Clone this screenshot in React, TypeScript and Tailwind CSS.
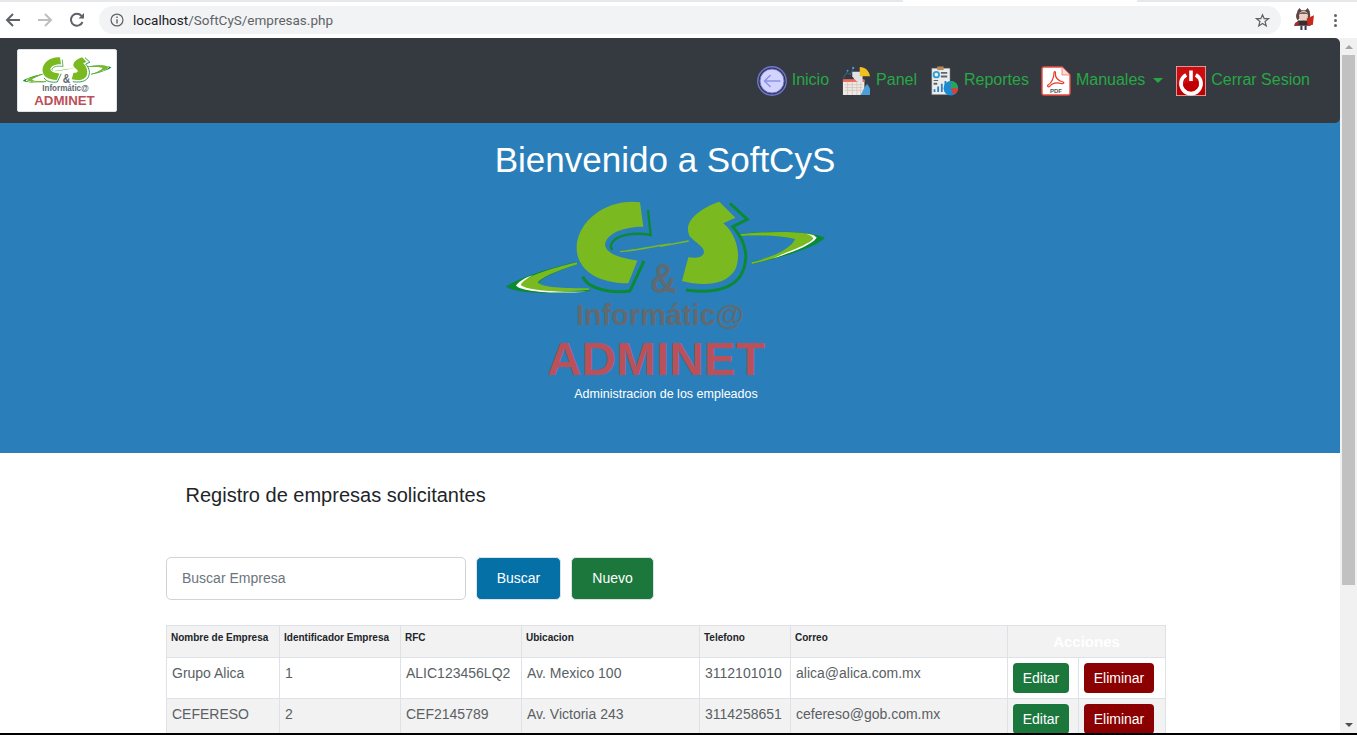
const F = { fontFamily: '"Liberation Sans", Arial, sans-serif' };
const LS = '"Liberation Sans", Arial, sans-serif';
const LG = "#7aba20";
const DG = "#0a8a34";

function Logo({ className = "" }: { className?: string }) {
  return (
    <svg viewBox="0 0 350 220" className={className}>
      <g transform="translate(10 5) scale(.3333)">
        <path d="M232 200C150 218 50 250 18 275C45 297 180 298 270 288L268 280C190 285 130 280 115 265C130 245 190 222 232 208Z" fill={DG} />
        <path d="M230 202C150 220 70 250 48 270C70 292 190 293 268 284L268 280C190 280 125 278 113 262C135 240 190 222 232 208Z" fill={LG} />
        <path d="M48 272C60 255 85 245 100 240C80 250 65 262 62 270C80 285 150 292 260 290C170 296 70 292 48 272Z" fill="#ffffff" />
        <path d="M420 22C330 10 235 70 230 155C228 215 280 265 385 265L412 197C370 190 320 180 315 150C318 115 370 95 430 95Z" fill={LG} />
        <path d="M444 45L452 120C410 112 345 115 333 150C331 158 335 162 338 164" fill="none" stroke={DG} strokeWidth="7" />
        <path d="M248 245C265 285 340 295 390 288L432 198" fill="none" stroke={DG} strokeWidth="9" />
        <path d="M360 168C400 165 460 152 510 145V148C460 158 400 170 360 172Z" fill={LG} />
      </g>
      <g transform="translate(170 5) scale(.3333)">
        <path d="M240 118C330 105 450 108 495 128C470 155 380 185 275 207V202C340 185 400 160 405 132C360 122 300 120 240 123Z" fill={DG} />
        <path d="M240 118C330 108 420 108 465 120C460 145 380 185 275 207V202C340 185 395 160 405 132C360 122 300 120 240 123Z" fill={LG} />
        <path d="M430 115C450 118 465 122 470 128C455 150 400 170 340 190C395 165 450 148 460 130C455 122 445 118 430 115Z" fill="#ffffff" />
        <path d="M178 20L226 68L190 85C232 120 245 185 225 225C195 275 120 272 66 258L85 187C105 190 130 190 132 170C132 155 110 145 90 125C65 80 120 40 178 20Z" fill={LG} />
        <path d="M210 25L262 73L218 95C260 140 270 195 240 245C205 292 130 292 78 285" fill="none" stroke={DG} strokeWidth="9" />
        <path d="M0 152L85 136L87 140L0 156Z" fill={LG} />
      </g>
      <text x="160" y="103" fontFamily={LS} fontSize="43" fontWeight="700" fill="#5f6a72" textLength="27" lengthAdjust="spacingAndGlyphs">&amp;</text>
      <text x="86" y="135" fontFamily={LS} fontSize="30" fontWeight="700" fill="#626a70" textLength="168" lengthAdjust="spacingAndGlyphs">Informátic@</text>
      <text x="57" y="185" fontFamily={LS} fontSize="47" fontWeight="700" fill="#b9505a" textLength="218" lengthAdjust="spacingAndGlyphs">ADMINET</text>
    </svg>
  );
}

function NavIcon({ kind }: { kind: string }) {
  if (kind === "inicio")
    return (
      <svg viewBox="0 0 32 32" className="w-[30px] h-[30px] shrink-0">
        <circle cx="16" cy="16" r="15.200" fill="#343a40" stroke="#7178d8" strokeWidth="1.400" />
        <circle cx="16" cy="16" r="12.800" fill="#d3d3ff" stroke="#6c70d0" strokeWidth="1" />
        <path d="M25 16H8M14.500 9.500L8 16L14.500 22.500" fill="none" stroke="#8a90e8" strokeWidth="1.500" />
      </svg>
    );
  if (kind === "panel")
    return (
      <svg viewBox="0 0 30 32" className="w-[28px] h-[30px] shrink-0">
        <path d="M1 15H24V31H1Z" fill="#efe8e3" />
        <path d="M1 14H24V17H1Z" fill="#ec6a5c" />
        <path d="M3 20H22M3 23H22M3 26H22M6 17V31M11 17V31M16 17V31M20 17V31" stroke="#c9bdb7" strokeWidth=".7" />
        <path d="M11 6H22V19C17 18 13 15 11 11Z" fill="#dfe3e6" />
        <path d="M19 1C25 1 29 5 30 11H19Z" fill="#f0c020" />
        <path d="M20 31L24 23L27 19L30 24V31Z" fill="#4a9fd8" />
        <path d="M1 13L5 7L9 9L12 3" fill="none" stroke="#35607f" strokeWidth="1.200" />
        <circle cx="12" cy="2" r="1.200" fill="#4a9fd8" />
        <circle cx="6" cy="5" r="1" fill="#4a9fd8" />
      </svg>
    );
  if (kind === "reportes")
    return (
      <svg viewBox="0 0 32 32" className="w-[29px] h-[30px] shrink-0">
        <path d="M2 2H22V31H2Z" fill="#ededec" stroke="#8f8f8f" strokeWidth=".5" />
        <path d="M8 0H15V4H8Z" fill="#b88a5a" />
        <circle cx="7" cy="9" r="3" fill="none" stroke="#2b9fd8" strokeWidth="2" />
        <path d="M12 6H19V8H12ZM12 10H19V12H12ZM4 15H9V16H4ZM4 18H8V20H4Z" fill="#5b6770" />
        <path d="M4 28V25H6V28ZM8 28V22H10V28ZM12 28V19H14V28ZM16 28V16H18V28Z" fill="#2b80c0" />
        <circle cx="23" cy="24" r="8" fill="#1b8ad0" />
        <path d="M23 24V16A8 8 0 0 1 31 24Z" fill="#26a65b" />
        <path d="M23 24H31A8 8 0 0 1 26 31Z" fill="#e43d30" />
      </svg>
    );
  if (kind === "pdf")
    return (
      <svg viewBox="0 0 30 30" className="w-[30px] h-[30px] shrink-0">
        <path d="M3 1H21L29 9V27Q29 29 27 29H3Q1 29 1 27V3Q1 1 3 1Z" fill="#fff" stroke="#ea4c40" strokeWidth="1.400" />
        <path d="M21 1V9H29" fill="#f7dcd9" stroke="#ea4c40" strokeWidth=".6" />
        <path d="M7 19C11 17 13 11 13 7C13 5 15 5 14.500 8C14 11 17 15 22 16C24 17 22 18 20 17.500C16 16 11 17 9 20C7 22 6 20 7 19Z" fill="none" stroke="#e8362a" strokeWidth="1.200" />
        <text x="15" y="26.500" textAnchor="middle" fontFamily={LS} fontSize="6" fontWeight="700" fill="#555">PDF</text>
      </svg>
    );
  return (
    <svg viewBox="0 0 30 30" className="w-[30px] h-[30px] shrink-0">
      <rect x="0.400" y="0.400" width="29.200" height="29.200" fill="#c00000" stroke="#e8b8b8" strokeWidth="0.800" />
      <path d="M1 1H29V13L1 19Z" fill="#d8181c" opacity="0.500" />
      <path d="M10.200 8.800A10 10 0 1 0 19.800 8.800" fill="none" stroke="#fff" strokeWidth="3.800" />
      <path d="M15 4.500V15" stroke="#fff" strokeWidth="3.600" />
    </svg>
  );
}

function NavItem({ kind, label, caret, className = "", labelClass = "" }: { kind: string; label: string; caret?: boolean; className?: string; labelClass?: string }) {
  return (
    <a className={"flex items-center gap-[5px] text-[16px] leading-6 text-[#28a745] " + className}>
      <NavIcon kind={kind} />
      <span className={"pb-[2px] " + labelClass}>{label}</span>
      {caret && <span className="ml-[3px] w-0 h-0 border-x-[5px] border-x-transparent border-t-[5px] border-t-[#28a745]" />}
    </a>
  );
}

const Th = ({ children }: { children?: React.ReactNode }) => (
  <th className="border border-[#dee2e6] px-[4px] pt-[6px] align-top text-left text-[10px] leading-[12px] font-bold text-[#212529]">{children}</th>
);

const Td = ({ children }: { children: React.ReactNode }) => (
  <td className="border border-[#dee2e6] px-[5px] pt-[6px] align-top text-[14px] leading-[18px] text-[#5a5f64]">{children}</td>
);

const BtnCell = ({ children }: { children: React.ReactNode }) => (
  <td className="border border-[#dee2e6] px-[5px] pt-[5px] align-top">{children}</td>
);

function ActionBtn({ label, color, w }: { label: string; color: string; w: string }) {
  return (
    <button className={"h-[30px] rounded-[4px] text-[14px] text-white " + color + " " + w}>{label}</button>
  );
}

const rows = [
  ["Grupo Alica", "1", "ALIC123456LQ2", "Av. Mexico 100", "3112101010", "alica@alica.com.mx"],
  ["CEFERESO", "2", "CEF2145789", "Av. Victoria 243", "3114258651", "cefereso@gob.com.mx"],
];

export default function App() {
  return (
    <div style={F} className="w-[1357px] h-[735px] overflow-hidden bg-white flex flex-col">
      {/* Browser toolbar */}
      <div className="h-[2px] shrink-0 flex bg-[#e6e8eb]">
        <div className="ml-[903px] w-[234px] bg-white" />
      </div>
      <header className="h-[36px] shrink-0 bg-white flex items-center">
        <div className="flex items-center w-[99px] pl-[5px] gap-[16px]">
          <svg viewBox="0 0 16 16" className="w-[16px] h-[16px]"><path d="M15 8H2M8 2L2 8L8 14" fill="none" stroke="#5f6368" strokeWidth="2" /></svg>
          <svg viewBox="0 0 16 16" className="w-[16px] h-[16px]"><path d="M1 8H14M8 2L14 8L8 14" fill="none" stroke="#bcbec1" strokeWidth="2" /></svg>
          <svg viewBox="0 0 16 16" className="w-[16px] h-[16px]"><path d="M13.500 10A6 6 0 1 1 12.500 3.800L14.500 5.500" fill="none" stroke="#5f6368" strokeWidth="2" /><path d="M15 1V6.500H9.500Z" fill="#5f6368" /></svg>
        </div>
        <div className="w-[1182px] h-[28px] rounded-full bg-[#f1f3f4] flex items-center pl-[11px] pr-[11px]">
          <svg viewBox="0 0 16 16" className="w-[14px] h-[14px] shrink-0"><circle cx="8" cy="8" r="6.800" fill="none" stroke="#5f6368" strokeWidth="1.400" /><path d="M8 7V12M8 4V5.700" stroke="#5f6368" strokeWidth="1.600" /></svg>
          <span className="ml-[9px] text-[13.5px] text-[#5f6368]" style={{ fontFamily: '"Roboto", sans-serif' }}>
            <span className="text-[#202124]">localhost</span>/SoftCyS/empresas.php
          </span>
          <svg viewBox="0 0 16 16" className="ml-auto w-[15px] h-[15px]"><path d="M8 1.800L9.800 6H14.400L10.700 9L12 13.800L8 11.200L4 13.800L5.300 9L1.600 6H6.200Z" fill="none" stroke="#5f6368" strokeWidth="1.300" /></svg>
        </div>
        <div className="flex items-center flex-1 pl-[11px]">
          <svg viewBox="0 0 22 23" className="w-[23px] h-[24px] -mt-[3px]">
            <path d="M5 4L7 1L9 3H13L15 1L17 4L17 11H5Z" fill="#5c4440" />
            <circle cx="11" cy="8.500" r="4.600" fill="#ecd2c4" />
            <path d="M6 8C7 4 15 4 16 8L14 6.500H8Z" fill="#4f3a38" />
            <path d="M5 5C3 8 4 12 6 13L7 9ZM17 5C18 8 17 11 16 12L15 9Z" fill="#5c4440" />
            <path d="M6 13H16L18 18H2L4 15Z" fill="#3b2b2e" />
            <path d="M14 11L21 8L20 17L15 18Z" fill="#c8281c" />
            <path d="M3 15L7 14L6 18L2 18Z" fill="#a0302a" />
            <path d="M8 18H10V22H8ZM12 18H14V22H12Z" fill="#3a3a55" />
          </svg>
          <div className="ml-[19px] flex flex-col gap-[2px]">
            <span className="w-[3px] h-[3px] rounded-full bg-[#5f6368]" />
            <span className="w-[3px] h-[3px] rounded-full bg-[#5f6368]" />
            <span className="w-[3px] h-[3px] rounded-full bg-[#5f6368]" />
          </div>
        </div>
      </header>

      <div className="flex-1 min-h-0 flex">
        <main className="w-[1340px] min-w-0 flex flex-col">
          {/* Navbar */}
          <nav className="relative z-10 h-[85px] shrink-0 bg-[#343a40] rounded-r-[5px] flex items-center justify-between pl-[17px] pr-[30px]">
            <div className="w-[100px] h-[63px] bg-white rounded-[2px] border border-[#dee2e6] flex justify-center overflow-hidden">
              <Logo className="w-[98px] h-[61px] mt-[4px] shrink-0" />
            </div>
            <div className="flex items-center gap-[13px]">
              <NavItem kind="inicio" label="Inicio" />
              <NavItem kind="panel" label="Panel" labelClass="ml-[1px]" />
              <NavItem kind="reportes" label="Reportes" />
              <NavItem kind="pdf" label="Manuales" caret className="-ml-px" />
              <NavItem kind="power" label="Cerrar Sesion" />
            </div>
          </nav>

          {/* Hero */}
          <section className="h-[335px] -mt-[5px] shrink-0 bg-[#2a7fba] flex flex-col items-center pt-[20px] pr-[10px] text-white">
            <h1 className="text-[35px] leading-[43px] font-normal">Bienvenido a SoftCyS</h1>
            <Logo className="w-[350px] h-[220px] mt-[9px] shrink-0" />
            <p className="-mt-[25px] ml-[2px] text-[12.5px] leading-[18px]">Administracion de los empleados</p>
          </section>

          {/* Content */}
          <section className="flex-1 min-h-0 overflow-hidden pl-[166px] pr-[174px]">
            <h2 className="mt-[30px] ml-[19.500px] text-[20px] leading-[24px] font-normal text-[#212529]">Registro de empresas solicitantes</h2>
            <div className="mt-[50px] flex items-center h-[43px]">
              <div className="w-[300px] h-[43px] rounded-[5px] border border-[#ced4da] bg-white flex items-center pl-[15px] text-[14px] text-[#6c757d]">Buscar Empresa</div>
              <button className="ml-[10px] w-[85px] h-[43px] rounded-[5px] border border-[#dee2e6] bg-[#0570a6] text-[14px] text-white">Buscar</button>
              <button className="ml-[10px] w-[83px] h-[43px] rounded-[5px] border border-[#dee2e6] bg-[#1c773d] text-[14px] text-white">Nuevo</button>
            </div>
            <table className="mt-[25px] w-[999px] table-fixed border-collapse">
              <colgroup>
                <col className="w-[113px]" />
                <col className="w-[121px]" />
                <col className="w-[121px]" />
                <col className="w-[178px]" />
                <col className="w-[91px]" />
                <col className="w-[217px]" />
                <col className="w-[71px]" />
                <col className="w-[87px]" />
              </colgroup>
              <thead>
                <tr className="h-[32px] bg-[#f2f2f2]">
                  <Th>Nombre de Empresa</Th>
                  <Th>Identificador Empresa</Th>
                  <Th>RFC</Th>
                  <Th>Ubicacion</Th>
                  <Th>Telefono</Th>
                  <Th>Correo</Th>
                  <th colSpan={2} className="border border-[#dee2e6] pt-[2px] text-center text-[15px] font-bold text-white">Acciones</th>
                </tr>
              </thead>
              <tbody>
                {rows.map((r, i) => (
                  <tr key={r[0]} className={"h-[41px] " + (i % 2 ? "bg-[#f2f2f2]" : "bg-white")}>
                    {r.map((c) => (
                      <Td key={c}>{c}</Td>
                    ))}
                    <BtnCell><ActionBtn label="Editar" color="bg-[#1c773d]" w="w-[56px]" /></BtnCell>
                    <BtnCell><ActionBtn label="Eliminar" color="bg-[#8b0000]" w="w-[70px]" /></BtnCell>
                  </tr>
                ))}
              </tbody>
            </table>
          </section>
        </main>

        {/* Scrollbar */}
        <aside className="w-[17px] shrink-0 bg-[#f1f1f1] flex flex-col items-center">
          <div className="h-[17px] flex items-center justify-center">
            <span className="w-0 h-0 border-x-[4px] border-x-transparent border-b-[4px] border-b-[#a3a3a3]" />
          </div>
          <div className="w-[13px] h-[530px] bg-[#c1c1c1]" />
          <div className="mt-auto h-[17px] flex items-center justify-center">
            <span className="w-0 h-0 border-x-[4px] border-x-transparent border-t-[4px] border-t-[#505050]" />
          </div>
        </aside>
      </div>

      {/* Bottom screen edge */}
      <div className="h-[2px] shrink-0 bg-black" />
    </div>
  );
}
